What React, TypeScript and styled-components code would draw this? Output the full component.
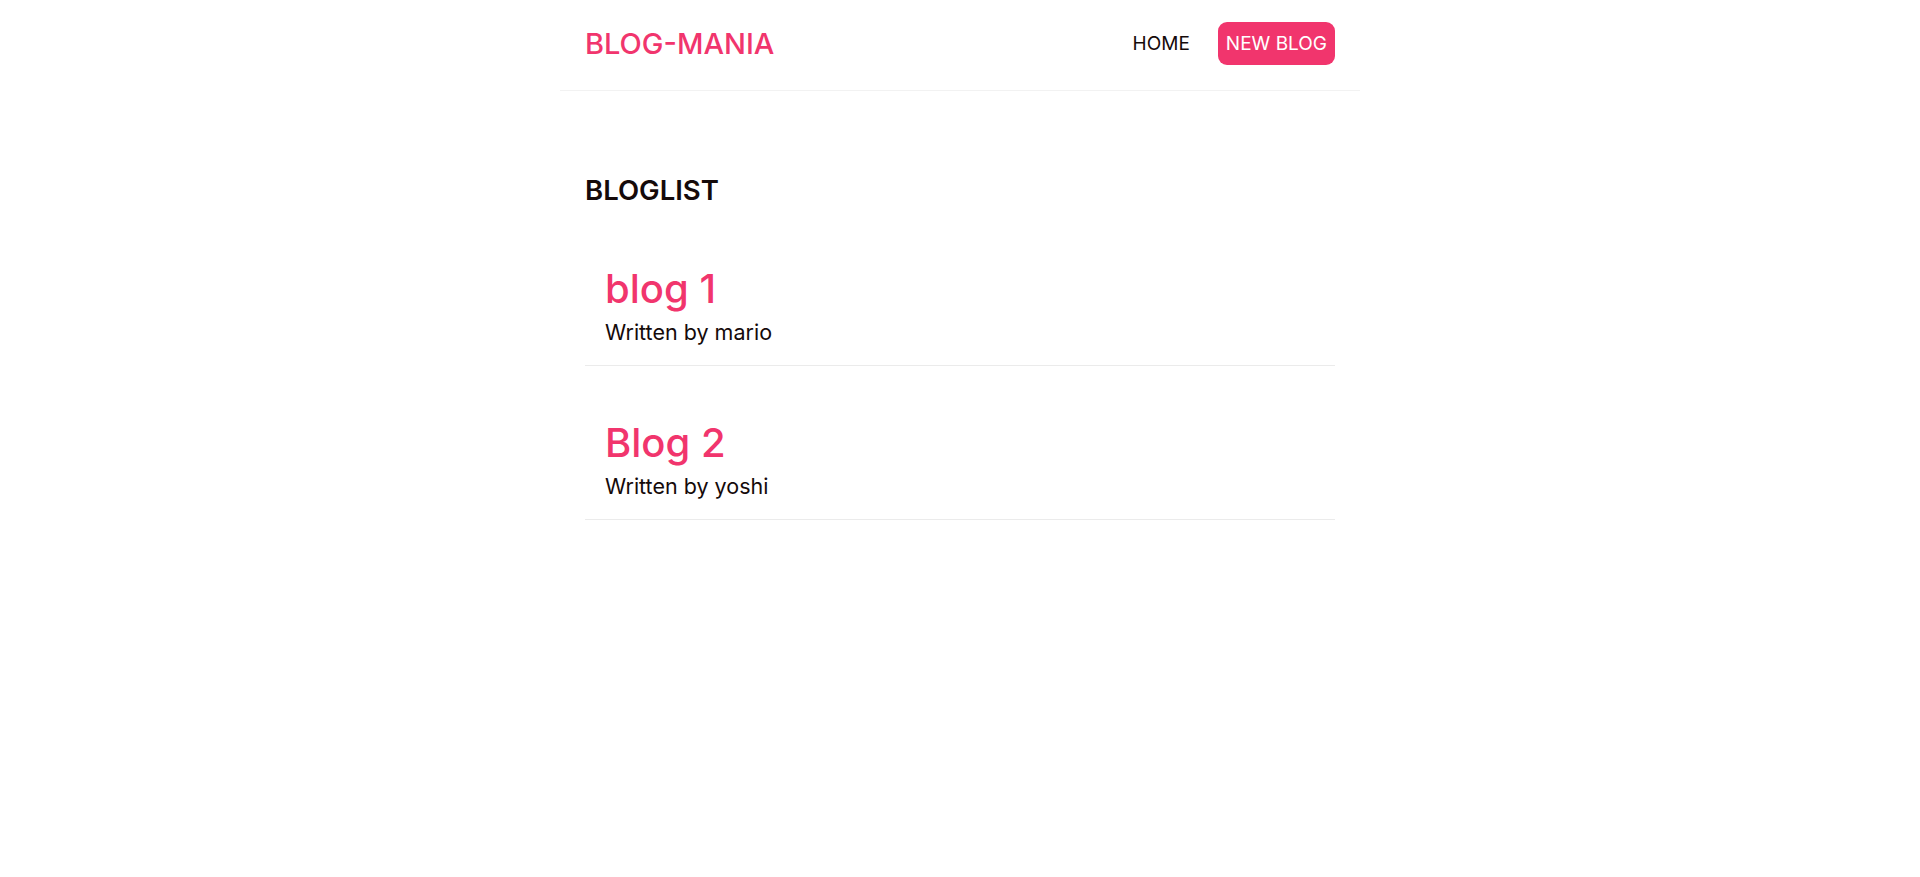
import styled, { createGlobalStyle } from 'styled-components'

const pink = '#f1356d'

const blogs = [
  { id: 1, title: 'blog 1', author: 'mario' },
  { id: 2, title: 'Blog 2', author: 'yoshi' },
]

export default function App() {
  return (
    <>
      <GlobalStyle />
      <Navbar>
        <Logo>BLOG-MANIA</Logo>
        <Links>
          <NavLink href="#">HOME</NavLink>
          <NewBlogButton href="#">NEW BLOG</NewBlogButton>
        </Links>
      </Navbar>
      <Content>
        <PageTitle>BLOGLIST</PageTitle>
        <BlogList>
          {blogs.map((blog) => (
            <BlogPreview key={blog.id}>
              <BlogTitle>{blog.title}</BlogTitle>
              <Author>Written by {blog.author}</Author>
            </BlogPreview>
          ))}
        </BlogList>
      </Content>
    </>
  )
}

const GlobalStyle = createGlobalStyle`
  * {
    margin: 0;
    box-sizing: border-box;
  }
  body {
    font-family: Inter, "Open Sans", sans-serif;
    color: #150a0a;
    background: #fff;
  }
`
const Navbar = styled.nav`
  width: 800px;
  height: 91px;
  margin: 0 auto;
  padding: 0 25px 4px;
  display: flex;
  align-items: center;
  border-bottom: 1px solid #f2f2f2;
`
const Logo = styled.h1`
  font-size: 29px;
  font-weight: 500;
  color: ${pink};
`
const Links = styled.div`
  margin-left: auto;
  display: flex;
  align-items: center;
  gap: 28px;
`
const NavLink = styled.a`
  font-size: 19px;
  color: #150a0a;
  text-decoration: none;
`
const NewBlogButton = styled(NavLink)`
  height: 43px;
  padding: 0 8px;
  display: flex;
  align-items: center;
  color: #fff;
  background: ${pink};
  border-radius: 9px;
`
const Content = styled.main`
  width: 800px;
  margin: 0 auto;
  padding: 82px 25px 0;
`
const PageTitle = styled.h2`
  font-size: 27.5px;
  font-weight: 600;
  line-height: 34px;
  margin-bottom: 38px;
`
const BlogList = styled.div`
  display: flex;
  flex-direction: column;
  gap: 33px;
`
const BlogPreview = styled.div`
  padding: 20px 20px 21px;
  border-bottom: 1px solid #ebebeb;
`
const BlogTitle = styled.h2`
  font-size: 40px;
  font-weight: 500;
  line-height: 48px;
  color: ${pink};
  margin-bottom: 7px;
`
const Author = styled.p`
  font-size: 21.5px;
  line-height: 24px;
`
